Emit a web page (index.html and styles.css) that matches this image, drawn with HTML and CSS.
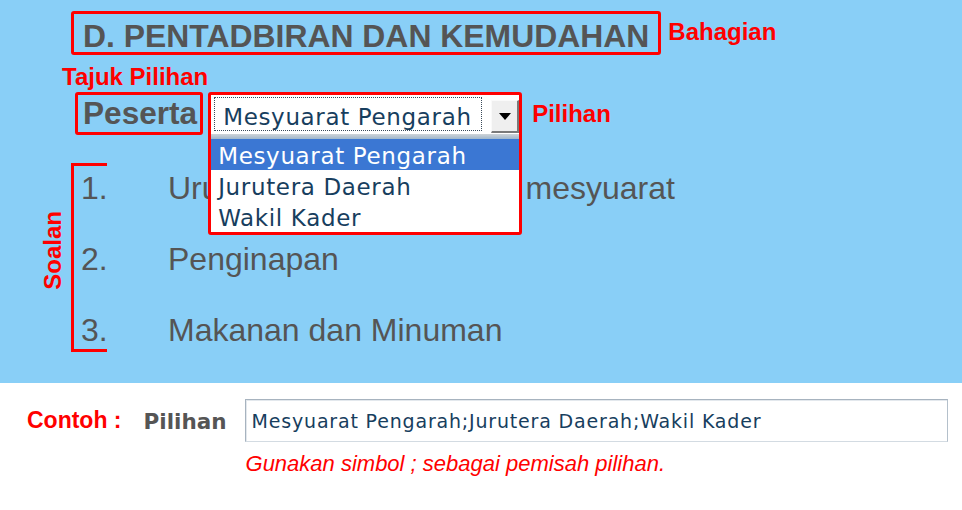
FILE: index.html
```html
<!DOCTYPE html>
<html lang="ms">
<head>
<meta charset="utf-8">
<title>Pentadbiran dan Kemudahan</title>
<link rel="stylesheet" href="styles.css">
</head>
<body>
<section class="panel">
  <div class="head-row">
    <h1 class="section-box">D. PENTADBIRAN DAN KEMUDAHAN</h1>
    <span class="note note-bahagian">Bahagian</span>
  </div>
  <div class="note note-tajuk">Tajuk Pilihan</div>
  <div class="field-row">
    <div class="title-box">Peserta</div>
    <div class="picker">
      <div class="select-bar">
        <div class="select-value">Mesyuarat Pengarah</div>
        <div class="select-btn">
          <svg width="12" height="7" viewBox="0 0 12 7"><path d="M0 0H12L6 7Z" fill="#000"/></svg>
        </div>
      </div>
      <div class="select-strip"></div>
      <ul class="options">
        <li class="option selected">Mesyuarat Pengarah</li>
        <li class="option">Jurutera Daerah</li>
        <li class="option">Wakil Kader</li>
      </ul>
    </div>
    <span class="note note-pilihan">Pilihan</span>
  </div>
  <div class="q-area">
    <div class="note note-soalan">Soalan</div>
    <div class="bracket"></div>
    <ol class="qlist">
      <li class="q"><span class="q-num">1.</span><span class="q-text">Urusan tempat dan notis mesyuarat</span></li>
      <li class="q"><span class="q-num">2.</span><span class="q-text">Penginapan</span></li>
      <li class="q"><span class="q-num">3.</span><span class="q-text">Makanan dan Minuman</span></li>
    </ol>
  </div>
</section>
<section class="example">
  <div class="note ex-label">Contoh :</div>
  <div class="ex-field-label">Pilihan</div>
  <div class="ex-col">
    <input class="ex-input" type="text" value="Mesyuarat Pengarah;Jurutera Daerah;Wakil Kader">
    <p class="ex-help">Gunakan simbol ; sebagai pemisah pilihan.</p>
  </div>
</section>
</body>
</html>
```
FILE: styles.css
```css
* { box-sizing: border-box; }
html, body { margin: 0; padding: 0; background: #fff; }
body { font-family: "Liberation Sans", Arial, sans-serif; }

.panel {
  background: #89cff7;
  height: 383px;
  padding-top: 11px;
}

.note {
  color: #ff0000;
  font-weight: bold;
  font-size: 24px;
  line-height: 26px;
}

.head-row {
  display: flex;
  align-items: flex-start;
  margin-left: 71px;
}
.section-box {
  margin: 0;
  height: 44px;
  border: 3px solid #ff0000;
  border-radius: 3px;
  padding: 4px 9px 0 9px;
  font-size: 31.9px;
  font-weight: bold;
  line-height: 36px;
  color: #555555;
  white-space: nowrap;
}
.note-bahagian { margin: 8px 0 0 7px; }

.note-tajuk { margin: 9px 0 0 62px; }

.field-row {
  display: flex;
  align-items: flex-start;
  height: 43px;
  margin: 2px 0 0 75px;
}
.title-box {
  height: 43px;
  border: 3px solid #ff0000;
  border-radius: 3px;
  padding: 0 3px 0 5px;
  font-size: 31.6px;
  font-weight: bold;
  line-height: 37px;
  color: #555555;
}
.picker {
  position: relative;
  z-index: 1;
  margin-left: 5px;
  width: 314px;
  height: 143px;
  border: 3px solid #ff0000;
  border-radius: 3px;
  background: #fff;
  font-family: "DejaVu Sans", Verdana, sans-serif;
  font-size: 23px;
  letter-spacing: 0.65px;
  color: #173e5e;
}
.select-bar {
  display: flex;
  height: 39px;
  padding: 2px 0 2px 3px;
  background: #fff;
}
.select-value {
  width: 268px;
  height: 34px;
  border: 1px dotted #3a4a5a;
  padding: 5px 0 0 8px;
  line-height: 29px;
  white-space: nowrap;
}
.select-btn {
  margin: 3px 0 0 auto;
  width: 28px;
  height: 33px;
  background: #efefef;
  border-top: 1px solid #fafafa;
  border-left: 1px solid #fafafa;
  border-right: 2px solid #7a7a7a;
  border-bottom: 2px solid #7a7a7a;
  display: flex;
  align-items: center;
  justify-content: center;
}
.select-strip {
  height: 5px;
  background: linear-gradient(#cfd4d8, #9fb6cb);
}
.options {
  list-style: none;
  margin: 0;
  padding: 0;
}
.option {
  height: 31px;
  padding: 2px 0 0 7px;
  line-height: 31px;
  white-space: nowrap;
}
.option.selected {
  background: #3b77d3;
  color: #ffffff;
}
.note-pilihan { margin: 9px 0 0 10px; }

.q-area {
  display: flex;
  align-items: flex-start;
  margin: 28px 0 0 40px;
}
.note-soalan {
  writing-mode: vertical-rl;
  transform: rotate(180deg);
  align-self: center;
  margin-bottom: 14px;
}
.bracket {
  flex: none;
  margin-left: 5px;
  width: 36px;
  height: 189px;
  border: 3px solid #ff0000;
  border-right: 0;
}
.qlist {
  list-style: none;
  margin: 0 0 0 -26px;
  padding: 7px 0 0 0;
  display: flex;
  flex-direction: column;
  gap: 35px;
  font-size: 32px;
  line-height: 36px;
  color: #555555;
}
.q { display: flex; white-space: nowrap; }
.q-num { width: 87px; }

.example {
  display: flex;
  align-items: flex-start;
  padding: 16px 0 0 27px;
}
.ex-label { margin-top: 8px; font-size: 23px; }
.ex-field-label {
  margin: 10px 0 0 22px;
  font-family: "DejaVu Sans", Verdana, sans-serif;
  font-weight: bold;
  font-size: 21.5px;
  line-height: 25px;
  color: #555555;
}
.ex-col { margin-left: 18px; }
.ex-input {
  display: block;
  width: 703px;
  height: 43px;
  margin: 0;
  padding: 0 0 0 6px;
  border: 1px solid #a7b3bf;
  border-right-color: #b4c0cb;
  border-bottom-color: #d3dbe2;
  box-shadow: inset 1px 1px 0 #e3e8ed;
  background: #fff;
  font-family: "DejaVu Sans", Verdana, sans-serif;
  font-size: 19px;
  letter-spacing: 0.82px;
  color: #173e5e;
  outline: none;
}
.ex-help {
  margin: 9px 0 0 1px;
  font-style: italic;
  font-size: 22px;
  line-height: 25px;
  color: #ff0000;
}
```
